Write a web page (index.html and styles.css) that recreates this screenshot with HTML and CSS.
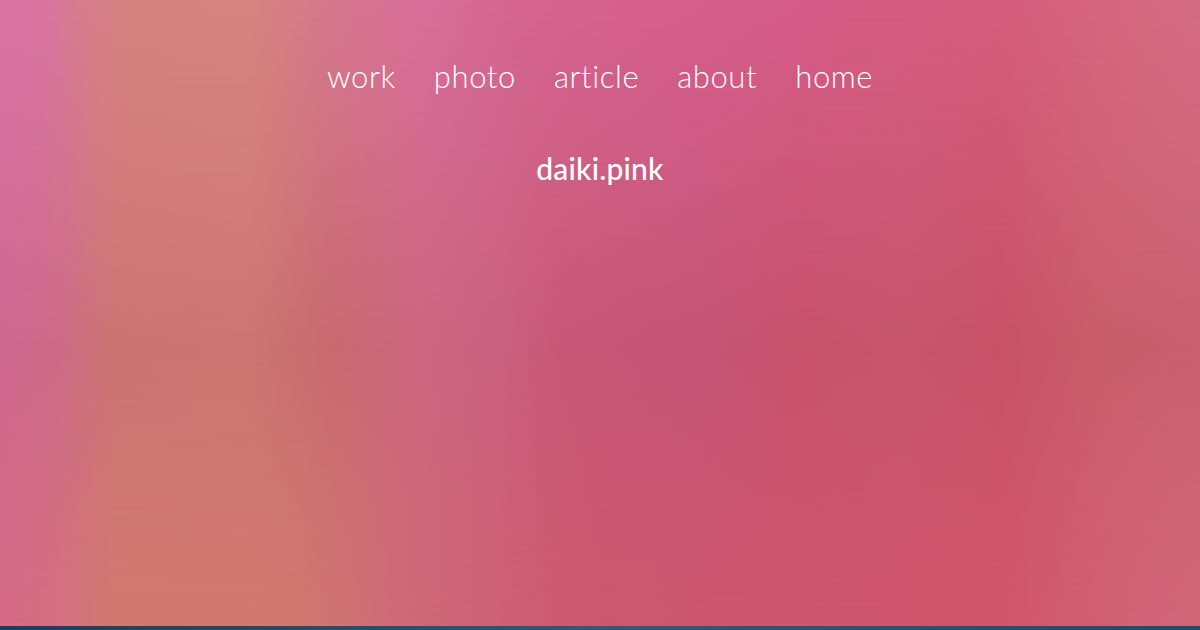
FILE: index.html
```html
<!DOCTYPE html>
<html lang="ja">
<head>
<meta charset="utf-8">
<title>daiki.pink</title>
<link rel="stylesheet" href="styles.css">
</head>
<body>
<div class="page">
  <div class="bg-top"></div>
  <div class="bg-bottom"></div>
  <nav class="nav">
    <a class="nav-link" href="#">work</a>
    <a class="nav-link" href="#">photo</a>
    <a class="nav-link" href="#">article</a>
    <a class="nav-link" href="#">about</a>
    <a class="nav-link" href="#">home</a>
  </nav>
  <h1 class="title">daiki.pink</h1>
  <div class="bottom-bar"></div>
</div>
</body>
</html>
```

FILE: styles.css
```css
html, body {
  margin: 0;
  padding: 0;
}
body {
  width: 1200px;
  height: 630px;
  overflow: hidden;
  font-family: Lato, "Open Sans", sans-serif;
}
.page {
  position: relative;
  width: 1200px;
  height: 630px;
  display: flex;
  flex-direction: column;
  align-items: center;
  background: linear-gradient(to right,
    #d06890 0px, #cd6c88 60px, #cc7474 110px, #cc7672 250px, #c86a70 330px,
    #cc6680 420px, #ca6080 500px, #c85878 560px, #c45578 700px,
    #c8526c 800px, #c6566e 900px, #c85268 1000px, #c85e6a 1100px, #c86070 1200px);
}
.bg-top, .bg-bottom {
  position: absolute;
  left: 0;
  right: 0;
  top: 0;
  bottom: 0;
  pointer-events: none;
}
.bg-top {
  background: linear-gradient(to right,
    #d874a2 0px, #d874a0 40px, #d67e8c 90px, #d5837f 130px, #d6847f 250px,
    #d4788c 320px, #d86e98 420px, #d4668e 520px, #d4628c 600px,
    #d45c88 800px, #d45c7c 1000px, #d46a82 1150px, #d46c86 1200px);
  -webkit-mask-image: linear-gradient(to bottom, #000 0%, rgba(0,0,0,0.6) 25%, transparent 55%);
  mask-image: linear-gradient(to bottom, #000 0%, rgba(0,0,0,0.6) 25%, transparent 55%);
}
.bg-bottom {
  background: linear-gradient(to right,
    #d46a88 0px, #d47080 60px, #d07870 110px, #d07870 300px,
    #ce6a78 400px, #cc5e74 520px, #cc5870 600px, #ce5670 800px,
    #d0566c 1000px, #d06478 1150px, #d06678 1200px);
  -webkit-mask-image: linear-gradient(to bottom, transparent 55%, rgba(0,0,0,0.7) 80%, #000 100%);
  mask-image: linear-gradient(to bottom, transparent 55%, rgba(0,0,0,0.7) 80%, #000 100%);
}
.nav {
  position: relative;
  display: flex;
  gap: 38px;
  margin-top: 56px;
}
.nav-link {
  color: #ffffff;
  text-decoration: none;
  font-size: 31px;
  font-weight: 300;
  line-height: 40px;
  letter-spacing: 0.6px;
}
.title {
  position: relative;
  margin: 52px 0 0;
  color: #ffffff;
  font-size: 30px;
  font-weight: 500;
  line-height: 40px;
  letter-spacing: 0.2px;
}
.bottom-bar {
  position: relative;
  margin-top: auto;
  width: 100%;
  height: 4px;
  background: linear-gradient(to right, #223a58, #3a5670 50%, #2c4862);
}
```
